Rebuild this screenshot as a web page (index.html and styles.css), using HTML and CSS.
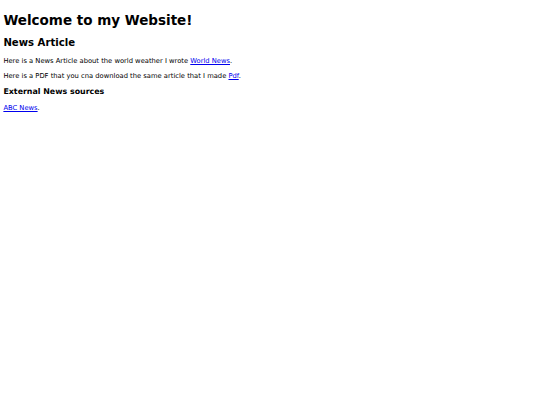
FILE: index.html
```html
<!DOCTYPE html>
<html>
<head>
<meta charset="utf-8">
<title>Welcome</title>
<link rel="stylesheet" href="styles.css">
</head>
<body>
<h1>Welcome to my Website!</h1>
<h2>News Article</h2>
<p>Here is a News Article about the world weather I wrote <a href="#">World News</a>.</p>
<p>Here is a PDF that you cna download the same article that I made <a href="#">Pdf</a>.</p>
<h3>External News sources</h3>
<p><a href="#">ABC News</a>.</p>
</body>
</html>
```
FILE: styles.css
```css
body {
  margin: 3.375px;
  font-family: "DejaVu Sans", sans-serif;
  font-size: 6.75px;
  color: #000;
  background: #fff;
}
h1 { font-size: 13.5px; margin: 0.67em 0; }
h2 { font-size: 10.125px; margin: 0.83em 0; }
h3 { font-size: 7.9px; margin: 1em 0; }
p { margin: 1em 0; }
a { color: #0000ee; }
```
